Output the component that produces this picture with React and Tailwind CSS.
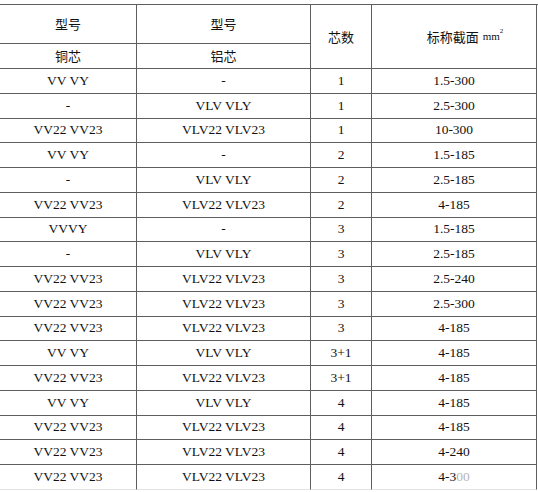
const rows = [
  ['VV VY', '-', '1', '1.5-300'],
  ['-', 'VLV VLY', '1', '2.5-300'],
  ['VV22 VV23', 'VLV22 VLV23', '1', '10-300'],
  ['VV VY', '-', '2', '1.5-185'],
  ['-', 'VLV VLY', '2', '2.5-185'],
  ['VV22 VV23', 'VLV22 VLV23', '2', '4-185'],
  ['VVVY', '-', '3', '1.5-185'],
  ['-', 'VLV VLY', '3', '2.5-185'],
  ['VV22 VV23', 'VLV22 VLV23', '3', '2.5-240'],
  ['VV22 VV23', 'VLV22 VLV23', '3', '2.5-300'],
  ['VV22 VV23', 'VLV22 VLV23', '3', '4-185'],
  ['VV VY', 'VLV VLY', '3+1', '4-185'],
  ['VV22 VV23', 'VLV22 VLV23', '3+1', '4-185'],
  ['VV VY', 'VLV VLY', '4', '4-185'],
  ['VV22 VV23', 'VLV22 VLV23', '4', '4-185'],
  ['VV22 VV23', 'VLV22 VLV23', '4', '4-240'],
  ['VV22 VV23', 'VLV22 VLV23', '4', '4-300'],
]

const head =
  "flex items-center justify-center border-r border-b border-[#5e5e5e] text-[13px] font-['Noto_Sans_CJK_SC',sans-serif]"

export default function App() {
  return (
    <div className="w-[538px] h-[492px] bg-white overflow-hidden pt-1 text-[#111]">
      <div className="grid grid-cols-[137px_174px_61px_165px] grid-rows-[39px_25px_repeat(17,24.75px)] border-t border-[#5e5e5e]">
        {/* header */}
        <div className={`col-start-1 row-start-1 ${head}`}>型号</div>
        <div className={`col-start-2 row-start-1 ${head}`}>型号</div>
        <div className={`col-start-3 row-start-1 row-span-2 ${head}`}>芯数</div>
        <div className={`col-start-4 row-start-1 row-span-2 pl-[22px] ${head}`}>
          <span>标称截面</span>
          <span className="ml-[4px] text-[11px] leading-none font-['Liberation_Serif',serif]">mm</span>
          <span className="text-[7px] leading-none -translate-y-[5px] font-['Liberation_Serif',serif]">2</span>
        </div>
        <div className={`col-start-1 row-start-2 ${head}`}>铜芯</div>
        <div className={`col-start-2 row-start-2 ${head}`}>铝芯</div>

        {rows.map((r, i) =>
          r.map((c, j) => (
            <div
              key={i + '-' + j}
              className={`flex items-center justify-center border-r border-b border-r-[#5e5e5e] text-[13.5px] font-['Liberation_Serif',serif] ${
                i === rows.length - 1 ? 'border-b-[#e2e2e2]' : 'border-b-[#5e5e5e]'
              }`}
            >
              {i === rows.length - 1 && j === 3 ? (
                <span>
                  4-3<span className="text-[#b5b5b5]">00</span>
                </span>
              ) : (
                c
              )}
            </div>
          ))
        )}
      </div>
    </div>
  )
}
